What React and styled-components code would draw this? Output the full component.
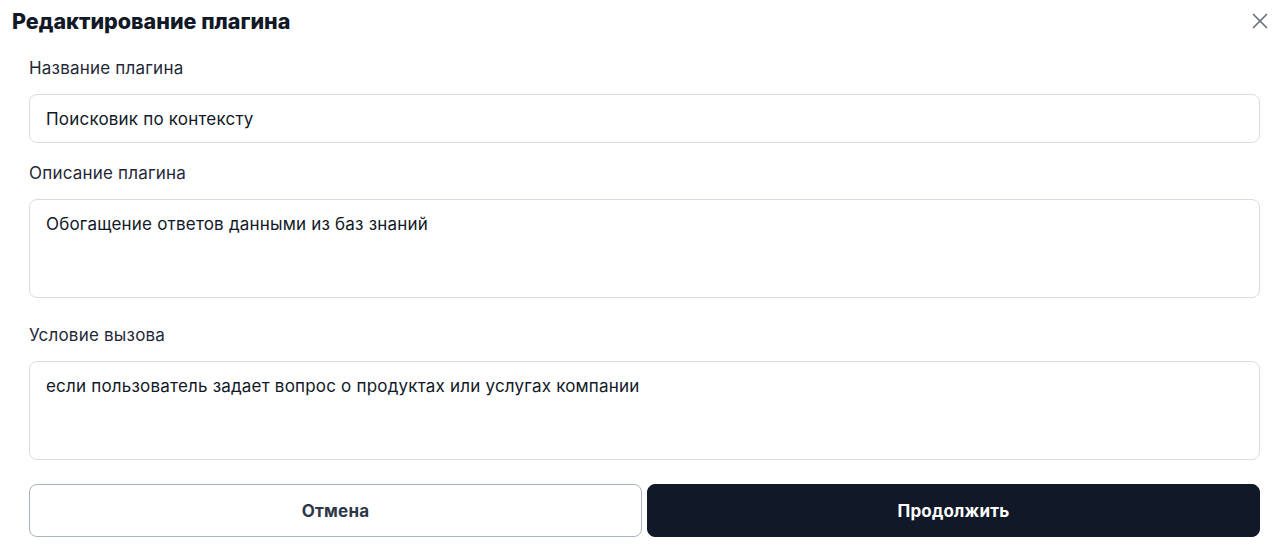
import React from 'react';
import styled, { createGlobalStyle } from 'styled-components';
import { X } from 'lucide-react';

const GlobalStyle = createGlobalStyle`
  html, body {
    margin: 0;
    padding: 0;
    background: #ffffff;
  }
  body {
    font-family: Inter, "Noto Sans", "Liberation Sans", sans-serif;
    color: #111827;
  }
  * {
    box-sizing: border-box;
  }
`;

const Modal = styled.div`
  width: 1280px;
  height: 547px;
  display: flex;
  flex-direction: column;
  padding: 6px 7px 0 12px;
`;

const Header = styled.div`
  display: flex;
  align-items: center;
  justify-content: space-between;
  height: 30px;
`;

const Title = styled.h2`
  margin: 0;
  font-size: 21.5px;
  font-weight: 800;
  color: #111827;
`;

const CloseButton = styled.button`
  border: none;
  background: none;
  padding: 0;
  display: flex;
  color: #6b7280;
  cursor: pointer;
`;

const Form = styled.div`
  display: flex;
  flex-direction: column;
  padding: 0 13px 0 17px;
  margin-top: 20px;
  letter-spacing: 0.2px;
`;

const Field = styled.div`
  display: flex;
  flex-direction: column;
  gap: 14px;
  margin-bottom: ${(p) => p.$after || 18}px;
`;

const Label = styled.label`
  font-size: 17px;
  line-height: 24px;
  color: #1f2937;
`;

const Input = styled.input`
  height: 49px;
  border: 1px solid #d9dde3;
  border-radius: 8px;
  padding: 0 16px;
  font: inherit;
  font-size: 17px;
  letter-spacing: inherit;
  color: #111827;
  outline: none;
`;

const TextArea = styled.textarea`
  display: block;
  height: 99px;
  border: 1px solid #d9dde3;
  border-radius: 8px;
  padding: 12px 16px;
  font: inherit;
  font-size: 17px;
  line-height: 24px;
  letter-spacing: inherit;
  color: #111827;
  resize: none;
  outline: none;
`;

const Actions = styled.div`
  display: grid;
  grid-template-columns: 1fr 1fr;
  gap: 5px;
  margin-top: 6px;
`;

const Button = styled.button`
  height: 53px;
  border-radius: 8px;
  font: inherit;
  font-size: 17px;
  font-weight: 700;
  letter-spacing: inherit;
  cursor: pointer;
  border: 1px solid ${(p) => (p.$primary ? '#111827' : '#a9b2c3')};
  background: ${(p) => (p.$primary ? '#111827' : '#ffffff')};
  color: ${(p) => (p.$primary ? '#ffffff' : '#2d3748')};
`;

export default function App() {
  return (
    <>
      <GlobalStyle />
      <Modal>
        <Header>
          <Title>Редактирование плагина</Title>
          <CloseButton aria-label="Закрыть">
            <X size={26} strokeWidth={1.6} />
          </CloseButton>
        </Header>
        <Form>
          <Field>
            <Label>Название плагина</Label>
            <Input defaultValue="Поисковик по контексту" />
          </Field>
          <Field $after={25}>
            <Label>Описание плагина</Label>
            <TextArea defaultValue="Обогащение ответов данными из баз знаний" />
          </Field>
          <Field $after={18}>
            <Label>Условие вызова</Label>
            <TextArea defaultValue="если пользователь задает вопрос о продуктах или услугах компании" />
          </Field>
          <Actions>
            <Button>Отмена</Button>
            <Button $primary>Продолжить</Button>
          </Actions>
        </Form>
      </Modal>
    </>
  );
}
